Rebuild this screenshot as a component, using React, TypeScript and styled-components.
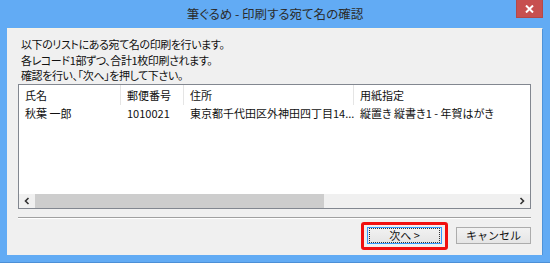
import styled, { createGlobalStyle } from 'styled-components';

const GlobalStyle = createGlobalStyle`
  html, body {
    margin: 0;
    padding: 0;
    background: #62abf4;
  }
  body {
    font-family: 'Noto Sans CJK JP', 'Noto Sans', sans-serif;
    font-feature-settings: 'palt';
  }
`;

const Frame = styled.div`
  display: flex;
  flex-direction: column;
  width: 550px;
  height: 263px;
  box-sizing: border-box;
  padding: 0 7px 7px;
  background: #62abf4;
  border-bottom: 1px solid #4c8fd6;
`;

const TitleBar = styled.div`
  display: grid;
  grid-template-columns: 1fr auto 1fr;
  height: 28px;
`;

const Title = styled.div`
  grid-column: 2;
  align-self: center;
  margin-top: -1px;
  color: #2b2b2b;
  font-size: 12.5px;
  white-space: nowrap;
`;

const CloseButton = styled.div`
  grid-column: 3;
  justify-self: end;
  display: flex;
  align-items: center;
  justify-content: center;
  width: 27px;
  height: 18px;
  background: #c75050;
  border: 1px solid #b44848;
  border-top: 0;
  box-sizing: border-box;
`;

const Client = styled.div`
  flex: 1;
  display: flex;
  flex-direction: column;
  padding: 8px 11px 0 11px;
  background: #f0f0f0;
  border-top: 1px solid #f7f3e6;
  border-right: 1px solid #4f93d8;
  box-sizing: border-box;
`;

const Message = styled.div`
  padding-left: 3px;
  color: #111;
  font-size: 11px;
  line-height: 15.5px;
  letter-spacing: -0.4px;
`;

const ListBox = styled.div`
  display: flex;
  flex-direction: column;
  height: 125px;
  background: #fff;
  border: 1px solid #828790;
  box-sizing: border-box;
`;

const HeaderRow = styled.div`
  display: grid;
  grid-template-columns: 102px 63px 170px 1fr;
  height: 20px;
`;

const HeaderCell = styled.div`
  display: flex;
  align-items: center;
  padding-left: 6px;
  border-right: 1px solid #e5e5e5;
  color: #111;
  font-size: 11px;

  &:last-child {
    border-right: 0;
  }
`;

const DataRow = styled.div`
  display: grid;
  grid-template-columns: 102px 63px 170px 1fr;
  height: 16px;
`;

const DataCell = styled.div`
  display: flex;
  align-items: center;
  padding-left: 6px;
  color: #111;
  font-size: 11px;
  white-space: nowrap;
  overflow: hidden;
`;

const ListBody = styled.div`
  flex: 1;
`;

const HScroll = styled.div`
  display: flex;
  height: 14px;
  background: #f0f0f0;
`;

const ScrollArrow = styled.div`
  display: flex;
  align-items: center;
  justify-content: center;
  width: 16px;
`;

const ScrollTrack = styled.div`
  flex: 1;
  display: flex;
`;

const ScrollThumb = styled.div<{ $width: number }>`
  width: ${(p) => p.$width}px;
  background: #cdcdcd;
`;

const Separator = styled.div`
  margin-top: 8px;
  height: 0;
  border-top: 1px solid #a0a0a0;
  border-bottom: 1px solid #fff;
`;

const ButtonRow = styled.div`
  display: flex;
  justify-content: flex-end;
  gap: 14px;
  margin-top: 8px;
`;

const ButtonWrap = styled.div`
  position: relative;
`;

const Highlight = styled.div`
  position: absolute;
  top: -5px;
  left: -6px;
  right: -6px;
  bottom: -6px;
  border: 3px solid #f01010;
  border-radius: 3px;
  pointer-events: none;
`;

const Button = styled.button<{ $default?: boolean }>`
  display: flex;
  align-items: center;
  justify-content: center;
  width: 75px;
  height: 17px;
  padding: 0;
  border: 1px solid ${(p) => (p.$default ? '#3399ff' : '#acacac')};
  background: linear-gradient(#f2f2f2, #e5e5e5);
  color: #111;
  font-family: inherit;
  font-size: 11px;
  box-sizing: border-box;
`;

const FocusRing = styled.span`
  display: flex;
  align-items: center;
  justify-content: center;
  width: 100%;
  height: 100%;
  border: 1px dotted #333;
  box-sizing: border-box;
  margin: 1px;
`;

const Chevron = ({ dir }: { dir: 'left' | 'right' }) => (
  <svg width="6" height="8" viewBox="0 0 6 8">
    <path
      d={dir === 'left' ? 'M4.5 1 L1.5 4 L4.5 7' : 'M1.5 1 L4.5 4 L1.5 7'}
      fill="none"
      stroke="#333"
      strokeWidth="1.6"
    />
  </svg>
);

const columns = ['氏名', '郵便番号', '住所', '用紙指定'];
const record = ['秋葉 一郎', '1010021', '東京都千代田区外神田四丁目14...', '縦置き 縦書き1 - 年賀はがき'];

const App = () => {
  return (
    <>
      <GlobalStyle />
      <Frame>
        <TitleBar>
          <Title>筆ぐるめ - 印刷する宛て名の確認</Title>
          <CloseButton>
            <svg width="9" height="8" viewBox="0 0 9 8">
              <path d="M1 0.5 L8 7.5 M8 0.5 L1 7.5" stroke="#fff" strokeWidth="2" />
            </svg>
          </CloseButton>
        </TitleBar>
        <Client>
          <Message>
            以下のリストにある宛て名の印刷を行います。
            <br />
            各レコード1部ずつ、合計1枚印刷されます。
            <br />
            確認を行い、「次へ」を押して下さい。
          </Message>
          <ListBox>
            <HeaderRow>
              {columns.map((c) => (
                <HeaderCell key={c}>{c}</HeaderCell>
              ))}
            </HeaderRow>
            <ListBody>
              <DataRow>
                {record.map((v) => (
                  <DataCell key={v}>{v}</DataCell>
                ))}
              </DataRow>
            </ListBody>
            <HScroll>
              <ScrollArrow>
                <Chevron dir="left" />
              </ScrollArrow>
              <ScrollTrack>
                <ScrollThumb $width={289} />
              </ScrollTrack>
              <ScrollArrow>
                <Chevron dir="right" />
              </ScrollArrow>
            </HScroll>
          </ListBox>
          <Separator />
          <ButtonRow>
            <ButtonWrap>
              <Button $default>
                <FocusRing>次へ &gt;</FocusRing>
              </Button>
              <Highlight />
            </ButtonWrap>
            <Button>キャンセル</Button>
          </ButtonRow>
        </Client>
      </Frame>
    </>
  );
};

export default App;
